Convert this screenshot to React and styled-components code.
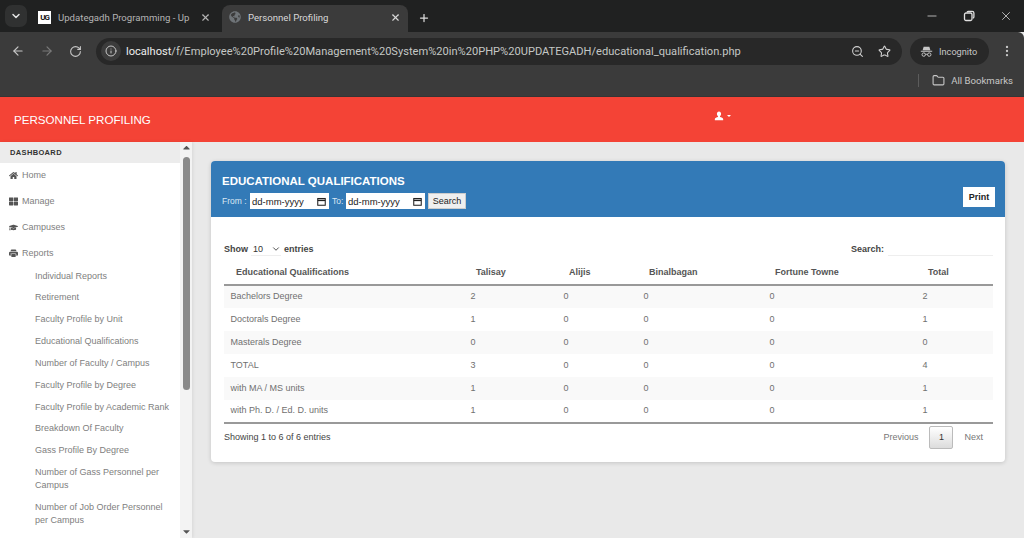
import React from "react";
import styled, { createGlobalStyle } from "styled-components";
import {
  ArrowLeft,
  ArrowRight,
  ChevronDown,
  EllipsisVertical,
  Folder,
  Info,
  Minus,
  Plus,
  RotateCw,
  Star,
  X,
  ZoomOut,
} from "lucide-react";
import {
  FaCaretDown,
  FaCaretUp,
  FaGlobeAmericas,
  FaGraduationCap,
  FaHome,
  FaThLarge,
} from "react-icons/fa";
import { BsPrinterFill } from "react-icons/bs";

const GlobalStyle = createGlobalStyle`
  html, body {
    margin: 0;
    height: 100%;
    overflow: hidden;
    background: #e9e9e9;
    font-family: "Liberation Sans", Arial, sans-serif;
  }
  #root {
    height: 100%;
  }
  * {
    box-sizing: border-box;
  }
`;

const Page = styled.div`
  display: flex;
  flex-direction: column;
  width: 1024px;
  height: 538px;
  overflow: hidden;
`;

/* browser frame */
const TabStrip = styled.div`
  display: flex;
  align-items: flex-end;
  height: 32px;
  padding-left: 5px;
  background: #202121;
  color: #c7c7c7;
`;

const TabListButton = styled.div`
  display: flex;
  align-items: center;
  justify-content: center;
  width: 22px;
  height: 22px;
  margin-bottom: 5px;
  border-radius: 7px;
  background: #303131;
  color: #e3e3e3;
`;

const Tab = styled.div`
  display: flex;
  align-items: center;
  width: ${(p) => p.$width}px;
  height: 27px;
  margin-left: ${(p) => p.$gap}px;
  padding: 0 ${(p) => p.$pad}px 3px 0;
  border-radius: 8px 8px 0 0;
  background: ${(p) => (p.$active ? "#3b3b3b" : "transparent")};
  font-size: 9.6px;
  font-family: Roboto, sans-serif;
  color: ${(p) => (p.$active ? "#d8d8d8" : "#b4b4b4")};
`;

const Favicon = styled.div`
  display: flex;
  align-items: center;
  justify-content: center;
  flex: none;
  width: 13px;
  height: 13px;
  background: #fff;
  color: #111;
  font-size: 8px;
  font-weight: 700;
  letter-spacing: -1px;
`;

const GlobeIcon = styled(FaGlobeAmericas)`
  flex: none;
  margin-left: 7px;
  color: #6f7478;
  font-size: 12px;
`;

const TabTitle = styled.span`
  flex: 1;
  margin: 0 7px;
  overflow: hidden;
  white-space: nowrap;
`;

const NewTab = styled.div`
  display: flex;
  margin: 0 0 8px 10px;
  color: #dcdcdc;
`;

const WindowButtons = styled.div`
  display: flex;
  gap: 23px;
  margin: 0 11px 9px auto;
  color: #e0e0e0;
`;

const RestoreIcon = styled.svg`
  width: 14px;
  height: 14px;
  fill: none;
  stroke: currentColor;
  stroke-width: 1.3;
`;

const Toolbar = styled.div`
  display: flex;
  align-items: center;
  height: 33px;
  padding: 5px 10px 0 11px;
  background: #3b3b3b;
  border-top-right-radius: 6px;
  color: #c7c7c7;
`;

const NavIcons = styled.div`
  display: flex;
  align-items: center;
  gap: 15px;
  width: 85px;
`;

const Omnibox = styled.div`
  display: flex;
  align-items: center;
  width: 806px;
  height: 27px;
  padding: 0 11px 0 5px;
  border-radius: 14px;
  background: #282828;
`;

const SiteInfo = styled.div`
  display: flex;
  align-items: center;
  justify-content: center;
  flex: none;
  width: 20px;
  height: 20px;
  margin-right: 5px;
  border-radius: 50%;
  background: #3c3c3c;
`;

const Url = styled.div`
  flex: 1;
  font-family: Roboto, sans-serif;
  font-size: 11.1px;
  color: #c4c7c5;
  white-space: nowrap;
  overflow: hidden;

  b {
    font-weight: 400;
    color: #ededed;
  }
`;

const OmniIcons = styled.div`
  display: flex;
  align-items: center;
  gap: 14px;
  color: #d0d0d0;
`;

const IncognitoPill = styled.div`
  display: flex;
  align-items: center;
  gap: 6px;
  width: 79px;
  height: 27px;
  margin-left: 8px;
  padding-left: 10px;
  border-radius: 14px;
  background: #282828;
  font-family: Roboto, sans-serif;
  font-size: 9.2px;
  color: #c7c7c7;
`;

const IncognitoSvg = styled.svg`
  flex: none;
  width: 13px;
  height: 13px;
  fill: currentColor;
`;

const Kebab = styled.div`
  display: flex;
  margin-left: 11px;
  color: #c7c7c7;
`;

const BookmarksBar = styled.div`
  display: flex;
  align-items: center;
  justify-content: flex-end;
  height: 32px;
  padding: 0 11px 1px 0;
  background: #3b3b3b;
  border-bottom: 1px solid #353535;
  font-family: Roboto, sans-serif;
  font-size: 9.6px;
  color: #c7c7c7;
`;

const BarDivider = styled.div`
  width: 1px;
  height: 13px;
  margin-right: 13px;
  background: #5c5c5c;
`;

const BookmarkLabel = styled.span`
  margin-left: 6px;
`;

/* app */
const AppBar = styled.header`
  flex: none;
  display: flex;
  align-items: center;
  height: 45px;
  padding: 0 14px 1px;
  background: #f44336;
  color: #fff;
`;

const Brand = styled.div`
  width: 136px;
  font-size: 11.6px;
  white-space: nowrap;
`;

const UserMenu = styled.div`
  display: flex;
  align-items: center;
  gap: 3px;
  margin: 0 0 7px 564px;
`;

const UserGlyph = styled.svg`
  width: 10px;
  height: 10px;
  fill: #fff;
`;

const Caret = styled.span`
  width: 0;
  height: 0;
  margin-top: 1px;
  border-left: 2.5px solid transparent;
  border-right: 2.5px solid transparent;
  border-top: 2.5px solid #fff;
`;

const Body = styled.div`
  flex: 1;
  display: flex;
  min-height: 0;
`;

const Sidebar = styled.aside`
  flex: none;
  display: flex;
  width: 192px;
  background: #fff;
  box-shadow: 1px 0 3px rgba(0, 0, 0, 0.08);
`;

const SideScroll = styled.div`
  flex: 1;
  min-width: 0;
  overflow: hidden;
`;

const SideHeading = styled.div`
  height: 21px;
  padding: 6px 0 0 10px;
  background: #ececec;
  font-size: 7.5px;
  font-weight: 700;
  letter-spacing: 0.35px;
  color: #333;
`;

const MainList = styled.ul`
  margin: -1px 0 -1px;
  padding: 0;
  list-style: none;
`;

const MainItem = styled.li`
  display: flex;
  align-items: center;
  height: 26px;
  padding-left: 8px;
  font-size: 9px;
  color: #808080;
`;

const ItemIcon = styled.span`
  display: flex;
  justify-content: center;
  width: 10px;
  margin-right: 4px;
  color: #555;
  font-size: 9px;
`;

const SubList = styled.ul`
  margin: 0;
  padding: 0 8px 0 35px;
  list-style: none;
`;

const SubItem = styled.li`
  padding: 4.5px 0 4.35px;
  font-size: 9px;
  line-height: 13px;
  color: #808080;
`;

const ScrollTrack = styled.div`
  flex: none;
  display: flex;
  flex-direction: column;
  align-items: center;
  width: 12px;
  background: #f3f3f3;
  color: #555;
  font-size: 11px;
`;

const ScrollThumb = styled.div`
  width: 7px;
  height: 233px;
  margin-top: 3px;
  border-radius: 4px;
  background: #8a8a8a;
`;

const ScrollEnd = styled.div`
  display: flex;
  justify-content: center;
  height: 12px;
  margin-top: ${(p) => (p.$bottom ? "auto" : "0")};
`;

const Main = styled.main`
  flex: 1;
  min-width: 0;
  padding: 19px 19px 0;
`;

const Card = styled.section`
  height: 301px;
  border-radius: 4px;
  background: #fff;
  box-shadow: 0 1px 4px rgba(0, 0, 0, 0.16);
`;

const CardHeader = styled.div`
  display: flex;
  align-items: flex-end;
  justify-content: space-between;
  height: 56px;
  padding: 0 10px 8px 11px;
  border-radius: 4px 4px 0 0;
  background: #337ab7;
  color: #fff;
`;

const CardTitle = styled.h2`
  margin: 0 0 5px;
  font-size: 11.5px;
  line-height: 14px;
  font-weight: 700;
`;

const FilterRow = styled.div`
  display: flex;
  align-items: center;
  gap: 3px;
  font-size: 8.5px;
  color: #dbe8f3;
`;

const FromLabel = styled.span`
  width: 25px;
  white-space: nowrap;
`;

const ToLabel = styled.span`
  width: 11px;
  white-space: nowrap;
`;

const DateField = styled.div`
  display: flex;
  align-items: center;
  justify-content: space-between;
  width: 79px;
  height: 16px;
  padding: 0 3px 0 2px;
  background: #fff;
  font-size: 9.5px;
  color: #222;
`;

const CalendarIcon = styled.svg`
  width: 9px;
  height: 9px;
  fill: none;
  stroke: #222;
  stroke-width: 1.4;
`;

const SearchButton = styled.button`
  width: 38px;
  height: 16px;
  padding: 0;
  border: 1px solid #ccc;
  background: #efefef;
  font: 9px "Liberation Sans", sans-serif;
  color: #222;
`;

const PrintButton = styled.button`
  height: 20px;
  width: 32px;
  padding: 0;
  border: 0;
  margin-bottom: 2px;
  background: #fff;
  font: 700 9px "Liberation Sans", sans-serif;
  color: #222;
`;

const CardBody = styled.div`
  padding: 25px 12px 0 13px;
`;

const TableTools = styled.div`
  display: flex;
  align-items: center;
  justify-content: space-between;
  height: 14px;
  font-size: 9px;
  font-weight: 700;
  color: #444;
`;

const LengthControl = styled.div`
  display: flex;
  align-items: center;
`;

const LengthSelect = styled.div`
  display: flex;
  align-items: center;
  justify-content: space-between;
  width: 30px;
  height: 14px;
  margin: 0 3px;
  padding: 0 0 0 2px;
  border-bottom: 1px solid #eee;
  font-weight: 400;
  color: #333;
`;

const SearchControl = styled.div`
  display: flex;
  align-items: center;
`;

const SearchLine = styled.div`
  width: 105px;
  height: 14px;
  margin-left: 4px;
  border-bottom: 1px solid #eee;
`;

const Table = styled.table`
  width: 769px;
  margin-top: 2px;
  border-collapse: collapse;
  table-layout: fixed;
  border-bottom: 2px solid #999;
`;

const HeadCell = styled.th`
  width: ${(p) => p.$width}px;
  height: 27px;
  padding: 2px 0 0 12px;
  border-bottom: 2px solid #999;
  text-align: left;
  font-size: 9px;
  font-weight: 700;
  color: #555;
`;

const Row = styled.tr`
  background: ${(p) => (p.$striped ? "#f9f9f9" : "#fff")};
`;

const Cell = styled.td`
  height: 23px;
  padding: 0 0 2px 6.5px;
  font-size: 9px;
  color: #707070;
`;

const TableFooter = styled.div`
  display: flex;
  align-items: center;
  justify-content: space-between;
  height: 26px;
  font-size: 9px;
  color: #444;
`;

const Pager = styled.div`
  display: flex;
  align-items: center;
  color: #777;
`;

const PagerCurrent = styled.div`
  display: flex;
  align-items: center;
  justify-content: center;
  width: 24px;
  height: 23px;
  margin: 0 11px;
  border: 1px solid #bbb;
  border-radius: 2px;
  background: linear-gradient(#fff, #dcdcdc);
  color: #333;
`;

const NextLabel = styled.span`
  margin-right: 10px;
`;

const browserUrl = "/f/Employee%20Profile%20Management%20System%20in%20PHP%20UPDATEGADH/educational_qualification.php";

const subItems = [
  "Individual Reports",
  "Retirement",
  "Faculty Profile by Unit",
  "Educational Qualifications",
  "Number of Faculty / Campus",
  "Faculty Profile by Degree",
  "Faculty Profile by Academic Rank",
  "Breakdown Of Faculty",
  "Gass Profile By Degree",
  "Number of Gass Personnel per Campus",
  "Number of Job Order Personnel per Campus",
  "GASS Personnel with Completed Degree",
];

const columns = [
  { label: "Educational Qualifications", width: 240 },
  { label: "Talisay", width: 93 },
  { label: "Alijis", width: 80 },
  { label: "Binalbagan", width: 126 },
  { label: "Fortune Towne", width: 153 },
  { label: "Total", width: 77 },
];

const rows = [
  ["Bachelors Degree", 2, 0, 0, 0, 2],
  ["Doctorals Degree", 1, 0, 0, 0, 1],
  ["Masterals Degree", 0, 0, 0, 0, 0],
  ["TOTAL", 3, 0, 0, 0, 4],
  ["with MA / MS units", 1, 0, 0, 0, 1],
  ["with Ph. D. / Ed. D. units", 1, 0, 0, 0, 1],
];

const Calendar = () => (
  <CalendarIcon viewBox="0 0 12 12">
    <rect x="1" y="2" width="10" height="9" />
    <path d="M1 4.5h10" strokeWidth="2" />
  </CalendarIcon>
);

const BrowserFrame = () => (
  <>
    <TabStrip>
      <TabListButton>
        <ChevronDown size={12} strokeWidth={3} />
      </TabListButton>
      <Tab $width={184} $gap={11} $pad={11}>
        <Favicon>UG</Favicon>
        <TabTitle>Updategadh Programming - Up</TabTitle>
        <X size={11} strokeWidth={2.5} />
      </Tab>
      <Tab $width={186} $gap={0} $pad={7} $active>
        <GlobeIcon />
        <TabTitle>Personnel Profiling</TabTitle>
        <X size={11} strokeWidth={2.5} />
      </Tab>
      <NewTab>
        <Plus size={12} strokeWidth={2.5} />
      </NewTab>
      <WindowButtons>
        <Minus size={14} strokeWidth={1.3} />
        <RestoreIcon viewBox="0 0 14 14">
          <rect x="2.5" y="4" width="7.5" height="7.5" rx="1.5" />
          <path d="M5 3.2c.3-.6.8-.9 1.4-.9h3.8c1 0 1.7.7 1.7 1.7v3.8c0 .6-.3 1.1-.9 1.4" />
        </RestoreIcon>
        <X size={14} strokeWidth={1.3} />
      </WindowButtons>
    </TabStrip>
    <Toolbar>
      <NavIcons>
        <ArrowLeft size={14} />
        <ArrowRight size={14} color="#7a7a7a" />
        <RotateCw size={13} />
      </NavIcons>
      <Omnibox>
        <SiteInfo>
          <Info size={12} />
        </SiteInfo>
        <Url>
          <b>localhost</b>
          {browserUrl}
        </Url>
        <OmniIcons>
          <ZoomOut size={13} />
          <Star size={13} />
        </OmniIcons>
      </Omnibox>
      <IncognitoPill>
        <IncognitoSvg viewBox="0 0 16 16">
          <path d="M4.5 2h7l1.3 4.5H3.2zM1 7.2h14v1.2H1z" />
          <path
            d="M4.6 9.7a2.1 2.1 0 1 0 0 4.2 2.1 2.1 0 0 0 0-4.2zm6.8 0a2.1 2.1 0 1 0 0 4.2 2.1 2.1 0 0 0 0-4.2zM6.7 11.4h2.6"
            fill="none"
            stroke="currentColor"
            strokeWidth="1.2"
          />
        </IncognitoSvg>
        Incognito
      </IncognitoPill>
      <Kebab>
        <EllipsisVertical size={14} />
      </Kebab>
    </Toolbar>
    <BookmarksBar>
      <BarDivider />
      <Folder size={13} />
      <BookmarkLabel>All Bookmarks</BookmarkLabel>
    </BookmarksBar>
  </>
);

const SideNav = () => (
  <Sidebar>
    <SideScroll>
      <SideHeading>DASHBOARD</SideHeading>
      <MainList>
        <MainItem>
          <ItemIcon>
            <FaHome />
          </ItemIcon>
          Home
        </MainItem>
        <MainItem>
          <ItemIcon>
            <FaThLarge />
          </ItemIcon>
          Manage
        </MainItem>
        <MainItem>
          <ItemIcon>
            <FaGraduationCap />
          </ItemIcon>
          Campuses
        </MainItem>
        <MainItem>
          <ItemIcon>
            <BsPrinterFill />
          </ItemIcon>
          Reports
        </MainItem>
      </MainList>
      <SubList>
        {subItems.map((item) => (
          <SubItem key={item}>{item}</SubItem>
        ))}
      </SubList>
    </SideScroll>
    <ScrollTrack>
      <ScrollEnd>
        <FaCaretUp />
      </ScrollEnd>
      <ScrollThumb />
      <ScrollEnd $bottom>
        <FaCaretDown />
      </ScrollEnd>
    </ScrollTrack>
  </Sidebar>
);

const App = () => {
  return (
    <Page>
      <GlobalStyle />
      <BrowserFrame />
      <AppBar>
        <Brand>PERSONNEL PROFILING</Brand>
        <UserMenu>
          <UserGlyph viewBox="0 0 12 12">
            <path d="M6 .5c-1.6 0-2.5 1.2-2.5 2.9 0 1.2.6 2.3 1.3 2.9v.9c-1.5.5-3.8 1-3.8 2.3v1.5h10V9.5c0-1.3-2.3-1.8-3.8-2.3v-.9c.7-.6 1.3-1.7 1.3-2.9C8.5 1.7 7.6.5 6 .5z" />
          </UserGlyph>
          <Caret />
        </UserMenu>
      </AppBar>
      <Body>
        <SideNav />
        <Main>
          <Card>
            <CardHeader>
              <div>
                <CardTitle>EDUCATIONAL QUALIFICATIONS</CardTitle>
                <FilterRow>
                  <FromLabel>From :</FromLabel>
                  <DateField>
                    dd-mm-yyyy
                    <Calendar />
                  </DateField>
                  <ToLabel>To:</ToLabel>
                  <DateField>
                    dd-mm-yyyy
                    <Calendar />
                  </DateField>
                  <SearchButton>Search</SearchButton>
                </FilterRow>
              </div>
              <PrintButton>Print</PrintButton>
            </CardHeader>
            <CardBody>
              <TableTools>
                <LengthControl>
                  Show
                  <LengthSelect>
                    10
                    <ChevronDown size={10} />
                  </LengthSelect>
                  entries
                </LengthControl>
                <SearchControl>
                  Search:
                  <SearchLine />
                </SearchControl>
              </TableTools>
              <Table>
                <thead>
                  <tr>
                    {columns.map((col) => (
                      <HeadCell key={col.label} $width={col.width}>
                        {col.label}
                      </HeadCell>
                    ))}
                  </tr>
                </thead>
                <tbody>
                  {rows.map((row, index) => (
                    <Row key={row[0]} $striped={index % 2 === 0}>
                      {row.map((value, cellIndex) => (
                        <Cell key={cellIndex}>{value}</Cell>
                      ))}
                    </Row>
                  ))}
                </tbody>
              </Table>
              <TableFooter>
                Showing 1 to 6 of 6 entries
                <Pager>
                  Previous
                  <PagerCurrent>1</PagerCurrent>
                  <NextLabel>Next</NextLabel>
                </Pager>
              </TableFooter>
            </CardBody>
          </Card>
        </Main>
      </Body>
    </Page>
  );
};

export default App;
